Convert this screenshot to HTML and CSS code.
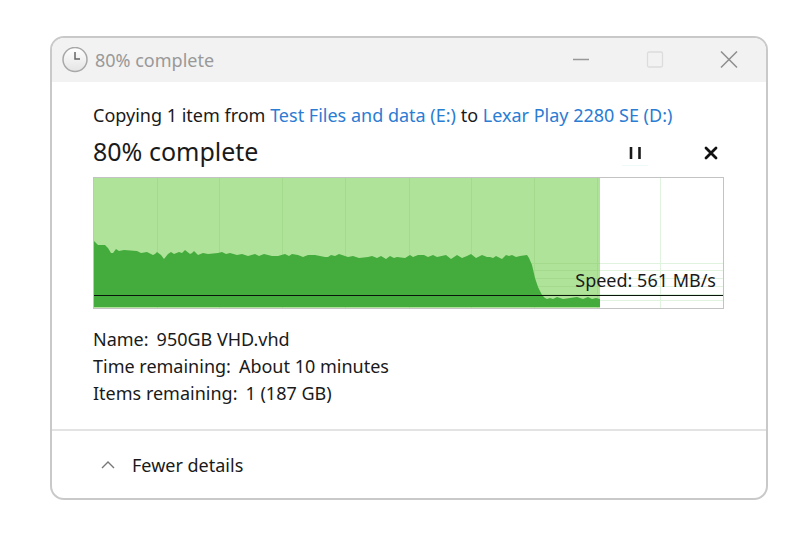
FILE: index.html
```html
<!DOCTYPE html>
<html lang="en">
  <head>
    <meta charset="UTF-8" />
    <meta name="viewport" content="width=device-width, initial-scale=1.0" />
    <title>80% complete</title>
    <link rel="stylesheet" href="styles.css">
  </head>

  <body>
    <main class="window">
      <header class="titlebar">
        <svg class="clock" viewBox="0 0 26 26" aria-hidden="true">
          <defs>
            <linearGradient id="clock_face" x1="0" y1="0" x2="0" y2="1">
              <stop offset="0" stop-color="#ffffff" />
              <stop offset="1" stop-color="#e4e4e4" />
            </linearGradient>
          </defs>
          <circle cx="13" cy="12.500" r="12" fill="url(#clock_face)" stroke="#a8a8a8" stroke-width="1.5" />
          <path d="M13 5v7h5" fill="none" stroke="#666666" stroke-width="1.5" />
        </svg>
        <span class="title">80% complete</span>
        <div class="window_buttons">
          <button type="button" aria-label="Minimize">
            <svg width="18" height="18" viewBox="0 0 18 18"><path d="M1 8.500h16" stroke="#999999" stroke-width="1.6" /></svg>
          </button>
          <button type="button" aria-label="Maximize" disabled>
            <svg width="18" height="18" viewBox="0 0 18 18"><rect x="1.5" y="1" width="15" height="15" rx="1.5" fill="none" stroke="#dcdcdc" stroke-width="1.3" /></svg>
          </button>
          <button type="button" aria-label="Close">
            <svg width="18" height="18" viewBox="0 0 18 18"><path d="M1 0.500l16 16M17 0.500L1 16.500" stroke="#8e8e8e" stroke-width="1.5" /></svg>
          </button>
        </div>
      </header>

      <section class="content">
        <p class="copy_path">Copying 1 item from <a href="#">Test Files and data (E:)</a> to <a href="#">Lexar Play 2280 SE (D:)</a></p>

        <div class="status">
          <h1>80% complete</h1>
          <div class="actions">
            <button type="button" class="pause" aria-label="Pause">
              <svg width="14" height="14" viewBox="0 0 14 14"><path d="M3 1v12M11.500 1v12" stroke="#1a1a1a" stroke-width="2.6" /></svg>
            </button>
            <button type="button" aria-label="Cancel">
              <svg width="14" height="14" viewBox="0 0 14 14"><path d="M2 2l10 10M12 2L2 12" stroke="#111111" stroke-width="2.8" stroke-linecap="round" /></svg>
            </button>
          </div>
        </div>

        <div class="chart">
          <svg viewBox="0 0 629 130" preserveAspectRatio="none" role="img" aria-label="Transfer speed">
            <path class="grid" d="M566.500 0v130M0 85.500h629M0 92.500h629M0 100.500h629M0 108.500h629M0 116.500h629M0 122.500h629" />
            <rect class="progress" width="506" height="130" />
            <path class="grid_done" d="M63.500 0v130M125.500 0v130M188.500 0v130M251.500 0v130M315.500 0v130M377.500 0v130M440.500 0v130M503.500 0v130M0 85.500h506M0 92.500h506M0 100.500h506M0 108.500h506M0 116.500h506M0 122.500h506" />
            <path class="speed_area" d="M0 129V63L4 67L11 67L14 70L17 75L19 75L22 71L25 73L30 72L43 73L47 75L53 74L59 77L61 76L63 74L67 77L70 81L74 76L77 74L80 76L85 74L88 75L91 72L96 76L98 75L100 73L104 77L109 75L114 76L124 75L128 74L132 76L136 75L143 77L148 76L154 78L161 76L165 78L170 76L178 78L184 78L191 76L195 78L198 76L204 77L209 79L214 77L221 77L231 79L234 79L237 77L241 78L245 76L254 79L259 78L265 80L274 79L278 78L283 80L287 78L292 81L296 78L300 80L303 79L311 80L316 77L319 79L324 77L330 77L334 79L339 77L343 79L352 77L357 81L363 77L368 80L373 78L377 76L382 80L388 77L393 79L396 79L399 80L402 78L408 81L412 77L415 78L418 77L422 79L426 78L433 77L435 80L438 87L441 100L444 109L448 117L451 120L453 121L456 120L459 121L463 119L469 121L476 120L483 119L489 121L494 119L498 121L502 120L506 121V129Z" />
            <path class="speed_line" d="M0 117.500h629" />
          </svg>
          <span class="speed">Speed: 561 MB/s</span>
        </div>

        <dl class="details">
          <div><dt>Name:</dt><dd>950GB VHD.vhd</dd></div>
          <div><dt>Time remaining:</dt><dd>About 10 minutes</dd></div>
          <div><dt>Items remaining:</dt><dd>1 (187 GB)</dd></div>
        </dl>
      </section>

      <footer class="footer">
        <button type="button" class="toggle">
          <svg width="14" height="12" viewBox="0 0 14 12" aria-hidden="true"><path d="M1 8l6-6 6 6" fill="none" stroke="#777777" stroke-width="1.4" /></svg>
          Fewer details
        </button>
      </footer>
    </main>
  </body>
</html>
```

FILE: styles.css
```css
* {
  box-sizing: border-box;
}

body {
  margin: 0;
  padding: 36px 32px 36px 50px;
  color: #1a1a1a;
  background-color: #ffffff;
  font-family: "Noto Sans", "Open Sans", sans-serif;
  font-size: 18px;
  line-height: 27px;
}

button {
  display: flex;
  align-items: center;
  justify-content: center;
  padding: 0;
  border: none;
  background: none;
  color: inherit;
  font: inherit;
}

.window {
  border: 2px solid #c9c9c9;
  border-radius: 14px;
  overflow: hidden;
}

.titlebar {
  display: flex;
  align-items: center;
  gap: 7px;
  height: 44px;
  padding-left: 10px;
  background-color: #f2f2f2;
}

.clock {
  width: 26px;
  height: 26px;
}

.title {
  color: #999999;
}

.window_buttons {
  display: flex;
  align-self: stretch;
  margin-left: auto;
}

.window_buttons button {
  width: 74px;
}

.content {
  padding: 20px 42px 22px 41px;
}

.copy_path {
  margin: 0;
}

.copy_path a {
  color: #2b7cd3;
  text-decoration: none;
}

.status {
  display: flex;
  align-items: center;
  justify-content: space-between;
  height: 48px;
}

h1 {
  margin: 0;
  padding-bottom: 4px;
  font-size: 25px;
  font-weight: normal;
  line-height: 32px;
}

.actions {
  display: flex;
  gap: 50px;
}

.actions button {
  width: 26px;
  height: 26px;
}

.actions .pause {
  border-bottom: 1px solid #eefafa;
}

.chart {
  position: relative;
  border: 1px solid #c3c3c3;
}

.chart svg {
  display: block;
  width: 100%;
  height: 130px;
}

.grid {
  stroke: #dff3df;
}

.grid_done {
  stroke: #a3da8c;
}

.progress {
  fill: #b0e39a;
}

.speed_area {
  fill: #44ab3d;
}

.speed_line {
  stroke: #0a140a;
}

.speed {
  position: absolute;
  right: 7px;
  bottom: 14px;
}

.details {
  margin: 17px 0 0;
}

.details div {
  display: flex;
  gap: 8px;
}

.details dd {
  margin: 0;
}

.footer {
  padding: 21px 49px 19px;
  border-top: 2px solid #e3e3e3;
}

.toggle {
  gap: 17px;
}
```
